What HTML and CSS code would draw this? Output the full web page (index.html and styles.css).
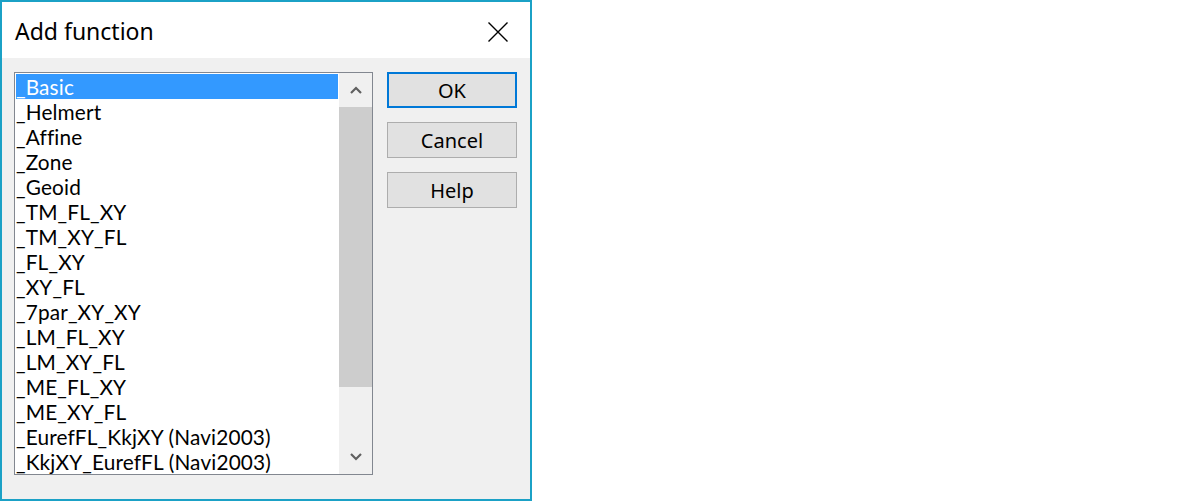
FILE: index.html
```html
<!DOCTYPE html>
<html>
  <head>
    <title>Add function</title>
    <link rel="stylesheet" href="styles.css">
  </head>

  <body>
    <div class="dialog">
      <div class="titlebar">
        <span class="title">Add function</span>
        <span class="close">
          <svg width="20" height="20" viewBox="0 0 20 20">
            <path d="M0.5 0.5 L19.5 19.5 M19.5 0.5 L0.5 19.5" stroke="#000" stroke-width="1.4" fill="none"/>
          </svg>
        </span>
      </div>

      <div class="dialog-body">
        <div class="listbox">
          <ul class="items">
            <li class="selected">_Basic</li>
            <li>_Helmert</li>
            <li>_Affine</li>
            <li>_Zone</li>
            <li>_Geoid</li>
            <li>_TM_FL_XY</li>
            <li>_TM_XY_FL</li>
            <li>_FL_XY</li>
            <li>_XY_FL</li>
            <li>_7par_XY_XY</li>
            <li>_LM_FL_XY</li>
            <li>_LM_XY_FL</li>
            <li>_ME_FL_XY</li>
            <li>_ME_XY_FL</li>
            <li>_EurefFL_KkjXY (Navi2003)</li>
            <li>_KkjXY_EurefFL (Navi2003)</li>
          </ul>
          <div class="scrollbar">
            <div class="arrow">
              <svg width="12" height="8" viewBox="0 0 12 8">
                <path d="M1 7 L6 2 L11 7" stroke="#606060" stroke-width="2.2" fill="none"/>
              </svg>
            </div>
            <div class="track">
              <div class="thumb"></div>
            </div>
            <div class="arrow">
              <svg width="12" height="8" viewBox="0 0 12 8">
                <path d="M1 1 L6 6 L11 1" stroke="#606060" stroke-width="2.2" fill="none"/>
              </svg>
            </div>
          </div>
        </div>

        <div class="buttons">
          <button class="btn btn-default" type="button">OK</button>
          <button class="btn" type="button">Cancel</button>
          <button class="btn" type="button">Help</button>
        </div>
      </div>
    </div>
  </body>
</html>
```

FILE: styles.css
```css
body {
  margin: 0;
  background-color: #ffffff;
  font-family: 'Noto Sans', 'Open Sans', sans-serif;
  color: #000000;
}

.dialog {
  width: 528px;
  height: 497px;
  border: 2px solid #1ba1c6;
  background-color: #f0f0f0;
  display: flex;
  flex-direction: column;
}

.titlebar {
  height: 56px;
  background-color: #ffffff;
  display: flex;
  align-items: center;
  justify-content: space-between;
  padding: 0 22px 0 13px;
}

.title {
  font-size: 23px;
  padding-top: 1px;
}

.close {
  display: block;
  height: 20px;
  margin-top: 4px;
}

.dialog-body {
  display: flex;
  gap: 14px;
  padding: 14px 0 0 12px;
}

.listbox {
  width: 357px;
  height: 401px;
  border: 1px solid #828790;
  background-color: #ffffff;
  display: flex;
  overflow: hidden;
}

/* Lato keeps each row's text box inside its 25px row */
.items {
  list-style: none;
  margin: 0;
  padding: 1px;
  width: 322px;
  font-family: 'Lato', 'Noto Sans', sans-serif;
  font-size: 20.8px;
}

.items li {
  height: 25px;
  line-height: 25px;
  white-space: nowrap;
  letter-spacing: 0.15px;
}

.items li.selected {
  background-color: #3399ff;
  color: #ffffff;
}

.scrollbar {
  width: 33px;
  background-color: #f0f0f0;
  display: flex;
  flex-direction: column;
}

.arrow {
  height: 34px;
  display: flex;
  align-items: center;
  justify-content: center;
}

.track {
  flex: 1;
}

.thumb {
  height: 280px;
  background-color: #cdcdcd;
}

.buttons {
  display: flex;
  flex-direction: column;
  gap: 14px;
}

.btn {
  width: 130px;
  height: 36px;
  background-color: #e1e1e1;
  border: 1px solid #adadad;
  font-family: 'Noto Sans', 'Open Sans', sans-serif;
  font-size: 20px;
  color: #000000;
  padding: 0;
}

.btn-default {
  border: 2px solid #0078d7;
}
```
